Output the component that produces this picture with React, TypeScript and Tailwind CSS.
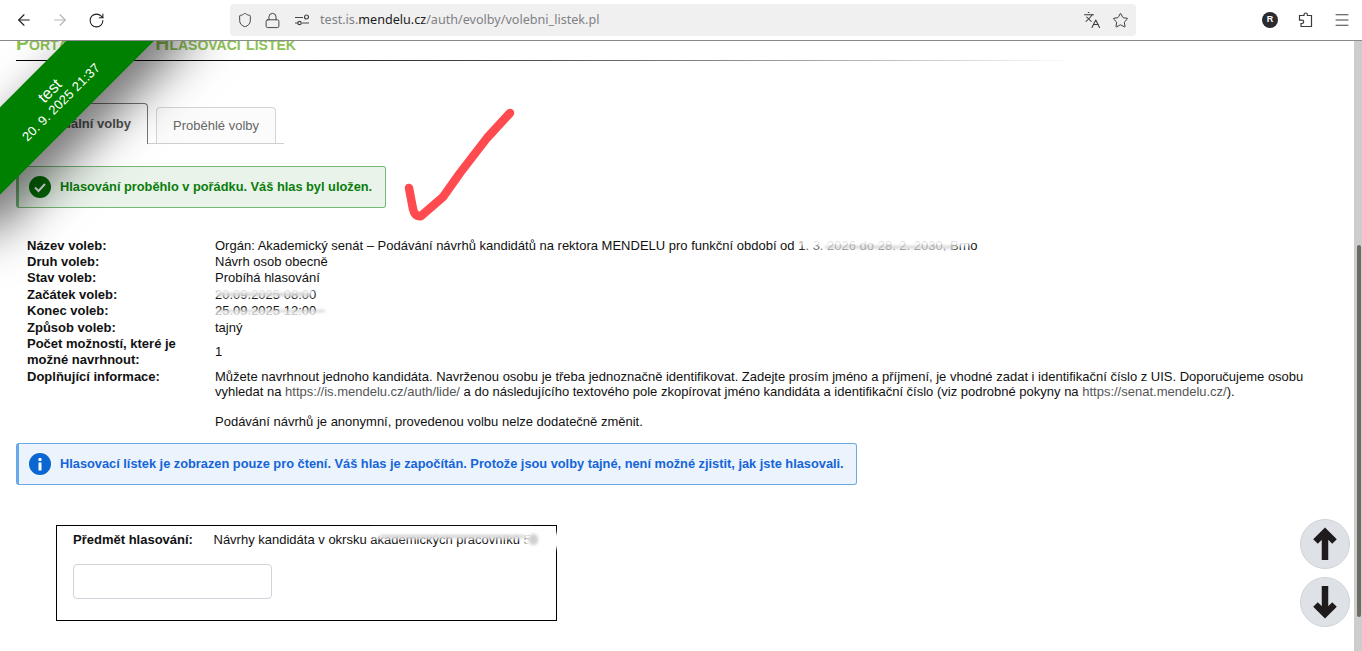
import React from 'react';
import { ArrowLeft, ArrowRight, RotateCw, Lock, Shield, Star, Languages, Menu } from 'lucide-react';

const rows = [
  { label: 'Název voleb:', value: 'name' },
  { label: 'Druh voleb:', value: 'Návrh osob obecně' },
  { label: 'Stav voleb:', value: 'Probíhá hlasování' },
  { label: 'Začátek voleb:', value: 'start' },
  { label: 'Konec voleb:', value: 'end' },
  { label: 'Způsob voleb:', value: 'tajný' },
];

function Smudge({ className }: { className: string }) {
  // white smear painted over hidden values in the screenshot
  return <span className={`absolute bg-white blur-[2px] ${className}`} />;
}

function Streak({ className }: { className: string }) {
  // grey fuzzy streak left by the smear
  return <span className={`absolute bg-[#cfcfcf] blur-[1.5px] rounded-full ${className}`} />;
}

function Toolbar() {
  return (
    <div className="h-[41px] shrink-0 flex items-center bg-white border-b border-[#8a8a8a] text-[#1f1f23]">
      <div className="w-[230px] flex items-center pl-[15px] gap-[18px]">
        <ArrowLeft size={18} strokeWidth={1.5} />
        <ArrowRight size={18} strokeWidth={1.5} className="text-[#b5b5b8]" />
        <RotateCw size={17} strokeWidth={1.5} className="ml-px" />
      </div>
      <div className="w-[906px] h-8 bg-[#f0f0f0] rounded flex items-center pl-[8px] pr-[8px] font-['Noto_Sans',sans-serif] text-[12.6px] text-[#808085]">
        <Shield size={16} strokeWidth={1.5} className="-ml-px text-[#45454a]" />
        <Lock size={17} strokeWidth={1.4} className="ml-[11px] text-[#45454a]" />
        <svg width="16" height="16" viewBox="0 0 16 16" fill="none" stroke="#45454a" strokeWidth="1.2" className="ml-[13px]">
          <path d="M1 5.5h8M1 11h3M8 11h7" />
          <circle cx="12.5" cy="5" r="2" />
          <circle cx="5.5" cy="11" r="1.7" />
        </svg>
        <span className="ml-[10px]">
          test.is.<span className="text-[#1c1b22]">mendelu.cz</span>/auth/evolby/volebni_listek.pl
        </span>
        <Languages size={18} strokeWidth={1.4} className="ml-auto text-[#3a3a3f]" />
        <Star size={17} strokeWidth={1.4} className="ml-[11px] -mr-px text-[#3a3a3f]" />
      </div>
      <div className="flex-1 flex items-center">
        <span className="ml-[126px] w-4 h-4 rounded-full bg-[#2b2a2e] text-white text-[9px] font-bold flex items-center justify-center font-['Liberation_Sans',sans-serif]">R</span>
        <svg width="16" height="16" viewBox="0 0 16 16" fill="none" stroke="#3a3a3f" strokeWidth="1.2" className="ml-[20px]">
          <path d="M6 3.5V2.7a1.7 1.7 0 0 1 3.4 0v.8h4.1v11H3v-3h1a1.6 1.6 0 0 0 0-3.4H1.5V3.5z" />
        </svg>
        <Menu size={18} strokeWidth={1.3} className="ml-[19px] text-[#3a3a3f]" />
      </div>
    </div>
  );
}

function Ribbon() {
  return (
    <div className="absolute left-[-95px] top-[24px] w-[300px] h-[62px] -rotate-45 bg-[#008000] text-white flex flex-col items-center justify-center shadow-[0_22px_50px_rgba(0,0,0,0.6)] z-20 font-['Liberation_Sans',sans-serif]">
      <div className="text-[16px] leading-[17px]">test</div>
      <div className="text-[13px] leading-[15px] tracking-[0.15px]">20. 9. 2025 21:37</div>
    </div>
  );
}

function Tabs() {
  return (
    <div className="mt-[42px] w-[268px] h-[41px] flex items-end gap-2 border-b border-[#d0d0d0]">
      <div className="h-[41px] w-[132px] -mb-px pr-[16px] bg-white border border-b-0 border-[#777] rounded-t flex items-center justify-end font-bold text-[#555]">
        Aktuální volby
      </div>
      <div className="h-[36px] w-[120px] bg-[#fbfbfb] border border-b-0 border-[#d5d5d5] rounded-t flex items-center justify-center text-[#666]">
        Proběhlé volby
      </div>
    </div>
  );
}

function Details() {
  return (
    <div className="mt-[29.76px] pl-[11px] grid grid-cols-[188px_1fr] leading-[16.36px] text-[#111]">
      {rows.map((r) => (
        <React.Fragment key={r.label}>
          <div className="font-bold">{r.label}</div>
          <div className="relative">
            {r.value === 'name' && (
              <>
                Orgán: Akademický senát – Podávání návrhů kandidátů na rektora MENDELU pro funkční období od 1. 3. 2026 do 28. 2. 2030, Brno
                <Smudge className="left-[585px] top-[1px] w-[170px] h-[7px]" />
                <Streak className="left-[610px] top-[8px] w-[130px] h-[3px]" />
                <Smudge className="left-[590px] top-[12px] w-[150px] h-[5px]" />
              </>
            )}
            {r.value === 'start' && (
              <>
                20.09.2025 08:00
                <Smudge className="left-[0px] top-[1px] w-[98px] h-[7px]" />
                <Streak className="left-[2px] top-[6px] w-[92px] h-[3px]" />
              </>
            )}
            {r.value === 'end' && (
              <>
                25.09.2025 12:00
                <Streak className="left-[2px] top-[7px] w-[108px] h-[3px]" />
                <Smudge className="left-[-2px] top-[10px] w-[114px] h-[8px]" />
              </>
            )}
            {r.value !== 'name' && r.value !== 'start' && r.value !== 'end' && r.value}
          </div>
        </React.Fragment>
      ))}
      <div className="font-bold">Počet možností, které je<br />možné navrhnout:</div>
      <div className="flex items-center">1</div>
      <div className="font-bold leading-[15px]">Doplňující informace:</div>
      <div className="leading-[15px] pr-[30px]">
        Můžete navrhnout jednoho kandidáta. Navrženou osobu je třeba jednoznačně identifikovat. Zadejte prosím jméno a příjmení, je vhodné zadat i identifikační číslo z UIS. Doporučujeme osobu vyhledat na <span className="text-[#555]">https://is.mendelu.cz/auth/lide/</span> a do následujícího textového pole zkopírovat jméno kandidáta a identifikační číslo (viz podrobné pokyny na <span className="text-[#555]">https://senat.mendelu.cz/</span>).
        <br /><br />
        Podávání návrhů je anonymní, provedenou volbu nelze dodatečně změnit.
      </div>
    </div>
  );
}

function ScrollButton({ dir }: { dir: 'up' | 'down' }) {
  return (
    <div className="w-[50px] h-[50px] rounded-full bg-[#dee2e6] border border-[#ced4da]">
      <svg width="48" height="48" viewBox="0 0 48 48" fill="none" stroke="#1f1a1c" strokeWidth="6.5">
        {dir === 'up' ? (
          <path d="M24 40V13M14.500 21.500L24 12L33.500 21.500" />
        ) : (
          <path d="M24 8V35M14.500 26.500L24 36L33.500 26.500" />
        )}
      </svg>
    </div>
  );
}

export default function App() {
  return (
    <div className="w-[1362px] h-[651px] flex flex-col overflow-hidden bg-white font-['Liberation_Sans',sans-serif] text-[13px]">
      <Toolbar />
      <div className="flex-1 flex min-h-0">
        <div className="relative flex-1 overflow-hidden">
          <Ribbon />

          <svg className="absolute left-[400px] top-[59px] z-10" width="125" height="125" viewBox="400 100 125 125" fill="none" stroke="#ff4a4f" strokeWidth="8.5" strokeLinecap="round" strokeLinejoin="round">
            <path d="M409 188L413 209Q415 217 421 216L443 197L460 173L487 138L510 113" />
          </svg>

          <div className="absolute right-[4px] top-[478px] flex flex-col gap-2 z-10">
            <ScrollButton dir="up" />
            <ScrollButton dir="down" />
          </div>

          <div className="px-4 flex flex-col">
            <div className="-mt-[11px] h-[30px] text-[19.5px] leading-[26px] font-bold [font-variant:small-caps] text-[#8cc152] whitespace-nowrap">
              Portál volby <span className="ml-[19px]">Hlasovací lístek</span>
            </div>
            <div className="h-px w-[1059px] bg-gradient-to-r from-black via-[#555] to-white" />

            <Tabs />

            <div className="mt-[22px] w-[370px] h-[42px] flex items-center bg-[#e9f3ea] border border-[#74b874] border-l-[3px] rounded-[3px] pl-[10px]">
              <svg width="22" height="22" viewBox="0 0 22 22">
                <circle cx="11" cy="11" r="11" fill="#056f05" />
                <path d="M6 11.500L9.500 15L16 8" fill="none" stroke="#fff" strokeWidth="2" />
              </svg>
              <span className="ml-[9px] text-[12.8px] font-bold text-[#0a7d0a]">Hlasování proběhlo v pořádku. Váš hlas byl uložen.</span>
            </div>

            <Details />

            <div className="mt-[14px] w-[841px] h-[42px] flex items-center bg-[#ebf3fc] border border-[#6aa8ea] border-l-[3px] rounded-[3px] pl-[10px]">
              <svg width="22" height="22" viewBox="0 0 22 22">
                <circle cx="11" cy="11" r="11" fill="#0a66d0" />
                <circle cx="11" cy="6.500" r="1.700" fill="#fff" />
                <rect x="9.500" y="9.500" width="3" height="8" fill="#fff" />
              </svg>
              <span className="ml-[9px] text-[12.8px] font-bold text-[#1565d8] whitespace-nowrap">Hlasovací lístek je zobrazen pouze pro čtení. Váš hlas je započítán. Protože jsou volby tajné, není možné zjistit, jak jste hlasovali.</span>
            </div>

            <div className="relative mt-10 ml-10 w-[501px] h-[96px] border border-black pl-4 pt-[6px] text-[#111]">
              <div className="flex leading-[16px]">
                <span className="w-[140.500px] font-bold">Předmět hlasování:</span>
                <span>Návrhy kandidáta v okrsku akademických pracovníků 5</span>
              </div>
              <div className="mt-[16px] w-[199px] h-[35px] border border-[#ced4da] rounded" />
              <Smudge className="left-[315px] top-[3px] w-[160px] h-[9px]" />
              <Streak className="left-[323px] top-[9px] w-[145px] h-[3px]" />
              <Smudge className="left-[468px] top-[12px] w-[38px] h-[10px]" />
              <Smudge className="left-[490px] top-[7px] w-[16px] h-[12px]" />
              <Streak className="left-[472px] top-[8px] w-[9px] h-[11px]" />
            </div>
          </div>
        </div>

        <div className="w-2 shrink-0 bg-[#cdcdcd] pl-[3px] pr-px pt-[204px]">
          <div className="h-[372px] rounded-full bg-[#6b6b66]" />
        </div>
      </div>
    </div>
  );
}
